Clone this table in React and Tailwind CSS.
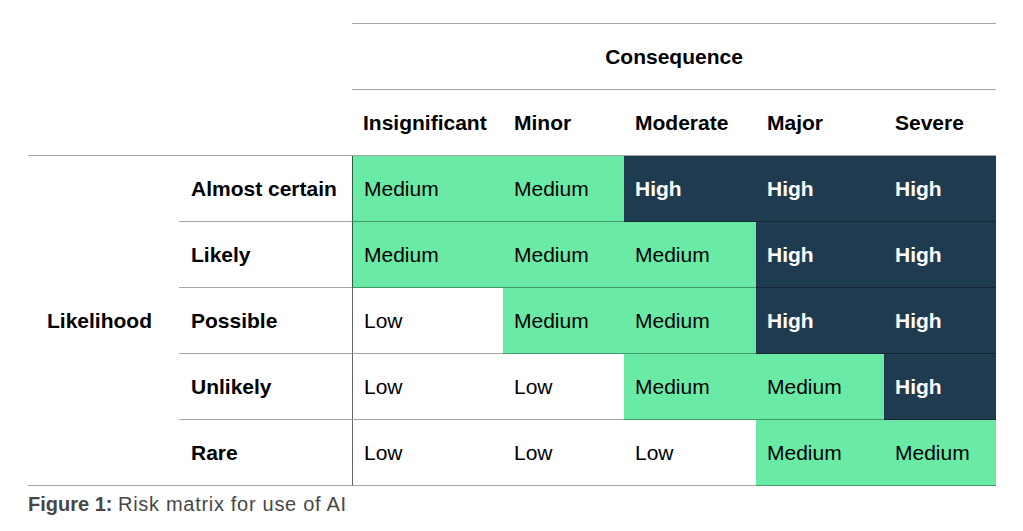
const heads = ["Insignificant", "Minor", "Moderate", "Major", "Severe"];

const rows = [
  ["Almost certain", ["Medium", "Medium", "High", "High", "High"]],
  ["Likely", ["Medium", "Medium", "Medium", "High", "High"]],
  ["Possible", ["Low", "Medium", "Medium", "High", "High"]],
  ["Unlikely", ["Low", "Low", "Medium", "Medium", "High"]],
  ["Rare", ["Low", "Low", "Low", "Medium", "Medium"]],
];

const levelClass = {
  Low: "bg-white text-black font-normal",
  Medium: "bg-[#69eba6] text-black font-normal",
  High: "bg-[#1f3b4f] text-white font-bold",
};

const App = () => {
  return (
    <div
      className="w-[1023px] h-[531px] bg-white text-black pt-[23px] pl-[28px]"
      style={{ fontFamily: '"Liberation Sans", Arial, sans-serif' }}
    >
      <div className="grid grid-cols-[151px_173px_151px_121px_132px_128px_112px] text-[21px] leading-none">
        <div className="col-start-3 col-span-5 h-[67px] border-y border-black/35 flex items-center justify-center font-bold">
          Consequence
        </div>

        <div className="col-span-2 h-[66px] border-b border-black/35" />
        {heads.map((h) => (
          <div key={h} className="h-[66px] border-b border-black/35 flex items-center pl-[11px] font-bold">
            {h}
          </div>
        ))}

        <div className="row-span-5 border-b border-black/35 flex items-center pl-[19px] font-bold">
          Likelihood
        </div>
        {rows.map(([label, cells]) => (
          <div key={label} className="contents">
            <div className="h-[66px] border-b border-black/35 flex items-center pl-[12px] font-bold">
              {label}
            </div>
            {cells.map((c, i) => (
              <div
                key={i}
                className={`h-[66px] border-b border-black/35 flex items-center pl-[11px] ${
                  i === 0 ? "border-l border-l-black/60" : ""
                } ${levelClass[c]}`}
              >
                {c}
              </div>
            ))}
          </div>
        ))}
      </div>
      <div className="mt-[6px] text-[20px] leading-tight text-[#474747]">
        <span className="font-bold">Figure 1:</span>{" "}
        <span className="tracking-[0.7px]">Risk matrix for use of AI</span>
      </div>
    </div>
  );
};

export default App;
